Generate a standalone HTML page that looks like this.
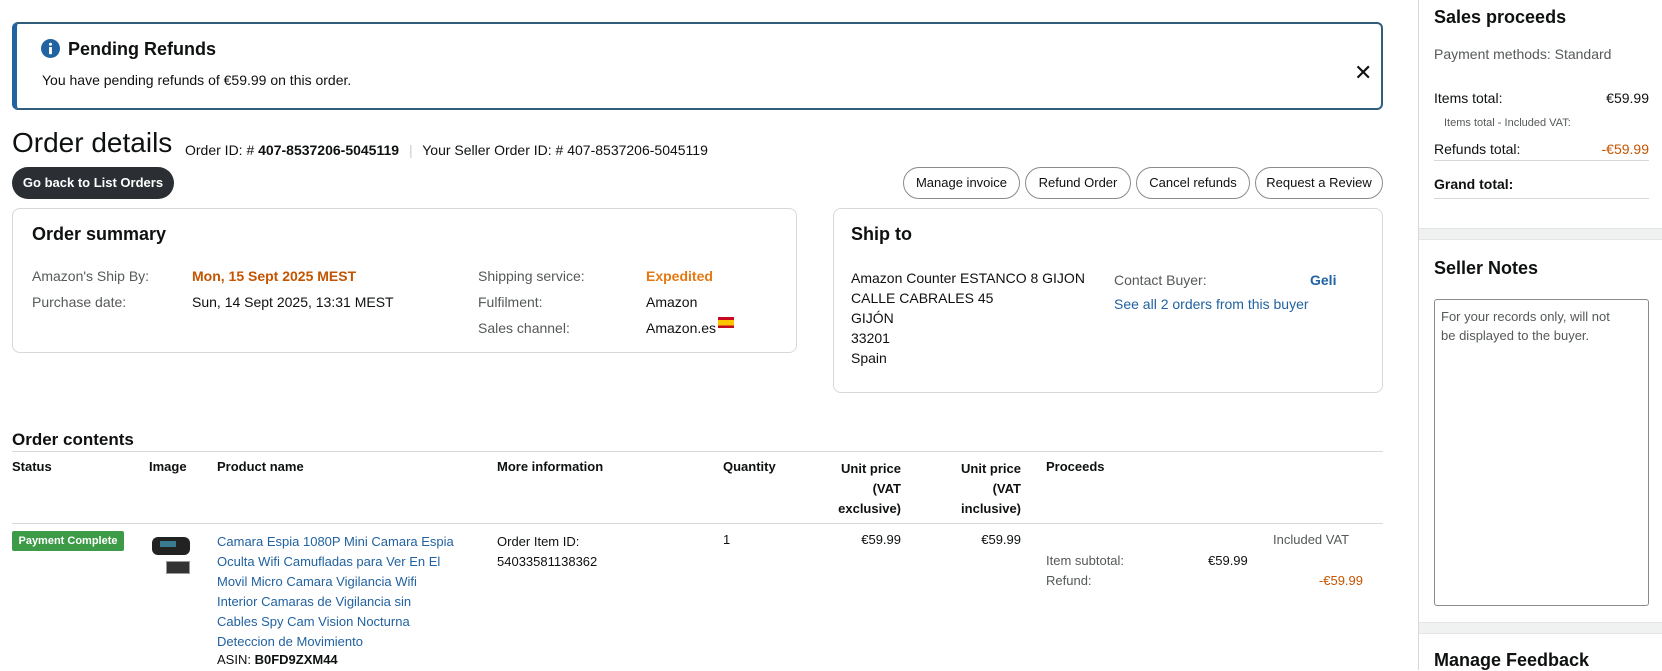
<!DOCTYPE html>
<html><head><meta charset="utf-8"><style>
*{box-sizing:border-box;margin:0;padding:0}
body{width:1662px;height:670px;overflow:hidden;background:#fff;font-family:"Liberation Sans",sans-serif;color:#0f1111;font-size:14px;position:relative}
.a{position:absolute;white-space:nowrap}
.g{color:#565959}
.o{color:#c45500}
.lk{color:#2162a1}
.b{font-weight:bold}
.btn{position:absolute;top:167px;height:32px;border:1px solid #888c8c;border-radius:16px;font-size:13px;line-height:30px;text-align:center;color:#0f1111}
.box{position:absolute;border:1px solid #d5d9d9;border-radius:8px}
.r{text-align:right}
</style></head><body>
<!-- banner -->
<div style="position:absolute;left:12px;top:22px;width:1371px;height:88px;border:2px solid #2f5f7a;border-left:5px solid #2162a1;border-radius:6px"></div>
<svg class="a" style="left:41px;top:39px" width="19" height="19" viewBox="0 0 20 20"><circle cx="10" cy="10" r="10" fill="#2162a1"/><circle cx="10" cy="5.5" r="1.6" fill="#fff"/><rect x="8.5" y="8.5" width="3" height="7.5" fill="#fff"/></svg>
<div class="a b" style="left:68px;top:39px;font-size:18px">Pending Refunds</div>
<div class="a" style="left:42px;top:72px;font-size:14px">You have pending refunds of €59.99 on this order.</div>
<div class="a" style="left:1354px;top:60px;font-size:22px">✕</div>

<div class="a" style="left:12px;top:127px;font-size:28px">Order details</div>
<div class="a" style="left:185px;top:142px;font-size:14px">Order ID: # <b>407-8537206-5045119</b> <span style="color:#ccc;margin:0 6px">|</span> Your Seller Order ID: # 407-8537206-5045119</div>
<div class="a b" style="left:12px;top:167px;width:162px;height:32px;border-radius:16px;background:#2b2f33;color:#fff;font-size:13px;line-height:32px;text-align:center">Go back to List Orders</div>
<div class="btn" style="left:903px;width:117px">Manage invoice</div>
<div class="btn" style="left:1025px;width:106px">Refund Order</div>
<div class="btn" style="left:1136px;width:114px">Cancel refunds</div>
<div class="btn" style="left:1255px;width:128px">Request a Review</div>

<div class="box" style="left:12px;top:208px;width:785px;height:145px"></div>
<div class="a b" style="left:32px;top:224px;font-size:18px">Order summary</div>
<div class="a g" style="left:32px;top:268px">Amazon's Ship By:</div>
<div class="a o b" style="left:192px;top:268px">Mon, 15 Sept 2025 MEST</div>
<div class="a g" style="left:32px;top:294px">Purchase date:</div>
<div class="a" style="left:192px;top:294px">Sun, 14 Sept 2025, 13:31 MEST</div>
<div class="a g" style="left:478px;top:268px">Shipping service:</div>
<div class="a b" style="left:646px;top:268px;color:#e47911">Expedited</div>
<div class="a g" style="left:478px;top:294px">Fulfilment:</div>
<div class="a" style="left:646px;top:294px">Amazon</div>
<div class="a g" style="left:478px;top:320px">Sales channel:</div>
<div class="a" style="left:646px;top:320px">Amazon.es</div>
<div class="a" style="left:718px;top:317px;width:16px;height:11px;background:linear-gradient(#c60b1e 25%,#ffc400 25%,#ffc400 75%,#c60b1e 75%)"></div>

<div class="box" style="left:833px;top:208px;width:550px;height:185px"></div>
<div class="a b" style="left:851px;top:224px;font-size:18px">Ship to</div>
<div class="a" style="left:851px;top:268px;line-height:20px">Amazon Counter ESTANCO 8 GIJON<br>CALLE CABRALES 45<br>GIJÓN<br>33201<br>Spain</div>
<div class="a g" style="left:1114px;top:272px">Contact Buyer:</div>
<div class="a lk b" style="left:1310px;top:272px">Geli</div>
<div class="a lk" style="left:1114px;top:296px">See all 2 orders from this buyer</div>

<div class="a b" style="left:12px;top:430px;font-size:17px">Order contents</div>
<div class="a" style="left:12px;top:451px;width:1371px;height:1px;background:#d5d9d9"></div>
<div class="a b" style="left:12px;top:459px;font-size:13px">Status</div>
<div class="a b" style="left:149px;top:459px;font-size:13px">Image</div>
<div class="a b" style="left:217px;top:459px;font-size:13px">Product name</div>
<div class="a b" style="left:497px;top:459px;font-size:13px">More information</div>
<div class="a b" style="left:723px;top:459px;font-size:13px">Quantity</div>
<div class="a b r" style="left:821px;top:459px;width:80px;font-size:13px;line-height:20px">Unit price<br>(VAT<br>exclusive)</div>
<div class="a b r" style="left:941px;top:459px;width:80px;font-size:13px;line-height:20px">Unit price<br>(VAT<br>inclusive)</div>
<div class="a b" style="left:1046px;top:459px;font-size:13px">Proceeds</div>
<div class="a" style="left:12px;top:523px;width:1371px;height:1px;background:#d5d9d9"></div>

<div class="a b" style="left:12px;top:531px;width:112px;height:20px;background:#3d9b47;color:#fff;font-size:11px;line-height:20px;text-align:center;border-radius:2px">Payment Complete</div>
<div class="a" style="left:152px;top:537px;width:38px;height:18px;background:#222;border-radius:6px"></div>
<div class="a" style="left:160px;top:541px;width:16px;height:6px;background:#3a7a90"></div>
<div class="a" style="left:166px;top:561px;width:24px;height:13px;background:#333;border:1px solid #999"></div>
<div class="a lk" style="left:217px;top:532px;line-height:20px;font-size:13px">Camara Espia 1080P Mini Camara Espia<br>Oculta Wifi Camufladas para Ver En El<br>Movil Micro Camara Vigilancia Wifi<br>Interior Camaras de Vigilancia sin<br>Cables Spy Cam Vision Nocturna<br>Deteccion de Movimiento</div>
<div class="a" style="left:217px;top:652px;font-size:13px">ASIN: <b>B0FD9ZXM44</b></div>
<div class="a" style="left:497px;top:532px;line-height:20px;font-size:13px">Order Item ID:<br>54033581138362</div>
<div class="a" style="left:723px;top:532px;font-size:13px">1</div>
<div class="a r" style="left:821px;top:532px;width:80px;font-size:13px">€59.99</div>
<div class="a r" style="left:941px;top:532px;width:80px;font-size:13px">€59.99</div>
<div class="a g" style="left:1273px;top:532px;font-size:13px">Included VAT</div>
<div class="a g" style="left:1046px;top:553px;font-size:13px">Item subtotal:</div>
<div class="a" style="left:1208px;top:553px;font-size:13px">€59.99</div>
<div class="a g" style="left:1046px;top:573px;font-size:13px">Refund:</div>
<div class="a o r" style="left:1283px;top:573px;width:80px;font-size:13px">-€59.99</div>

<!-- sidebar -->
<div class="a" style="left:1418px;top:0;width:1px;height:670px;background:#d5d9d9"></div>
<div class="a b" style="left:1434px;top:7px;font-size:18px">Sales proceeds</div>
<div class="a g" style="left:1434px;top:46px">Payment methods: Standard</div>
<div class="a" style="left:1434px;top:90px">Items total:</div>
<div class="a r" style="left:1560px;top:90px;width:89px">€59.99</div>
<div class="a g" style="left:1444px;top:117px;font-size:11px">Items total - Included VAT:</div>
<div class="a" style="left:1434px;top:141px">Refunds total:</div>
<div class="a o r" style="left:1560px;top:141px;width:89px">-€59.99</div>
<div class="a" style="left:1434px;top:160px;width:215px;height:1px;background:#d5d9d9"></div>
<div class="a b" style="left:1434px;top:176px">Grand total:</div>
<div class="a" style="left:1434px;top:198px;width:215px;height:1px;background:#d5d9d9"></div>
<div class="a" style="left:1419px;top:228px;width:243px;height:12px;background:#f0f2f2;border-top:1px solid #e3e6e6;border-bottom:1px solid #e3e6e6"></div>
<div class="a b" style="left:1434px;top:258px;font-size:18px">Seller Notes</div>
<div class="a" style="left:1434px;top:299px;width:215px;height:307px;border:1px solid #888c8c;border-radius:3px"></div>
<div class="a g" style="left:1441px;top:307px;font-size:13px;line-height:19px">For your records only, will not<br>be displayed to the buyer.</div>
<div class="a" style="left:1419px;top:622px;width:243px;height:12px;background:#f0f2f2;border-top:1px solid #e3e6e6;border-bottom:1px solid #e3e6e6"></div>
<div class="a b" style="left:1434px;top:650px;font-size:18px">Manage Feedback</div>
</body></html>
